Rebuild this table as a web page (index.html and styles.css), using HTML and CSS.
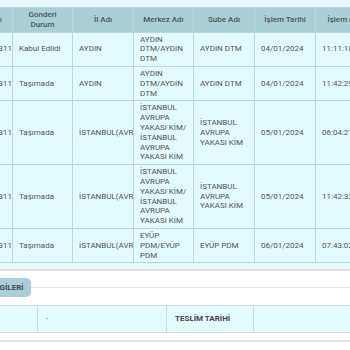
FILE: index.html
```html
<!DOCTYPE html>
<html lang="tr">
<head>
<meta charset="utf-8">
<link rel="stylesheet" href="styles.css">
</head>
<body>
<div class="card">
  <div class="scroller">
    <table class="grid">
      <colgroup>
        <col class="c1"><col class="c2"><col class="c3"><col class="c4"><col class="c5"><col class="c6"><col class="c7">
      </colgroup>
      <thead>
        <tr>
          <th>Gonderi No</th>
          <th>Gonderi Durum</th>
          <th>İl Adı</th>
          <th>Merkez Adı</th>
          <th>Sube Adı</th>
          <th>İşlem Tarihi</th>
          <th>İşlem saati</th>
        </tr>
      </thead>
      <tbody>
        <tr>
          <td class="num">720240104311</td>
          <td>Kabul Edildi</td>
          <td>AYDIN</td>
          <td>AYDIN DTM/AYDIN DTM</td>
          <td>AYDIN DTM</td>
          <td>04/01/2024</td>
          <td>11:11:18</td>
        </tr>
        <tr>
          <td class="num">720240104311</td>
          <td>Taşımada</td>
          <td>AYDIN</td>
          <td>AYDIN DTM/AYDIN DTM</td>
          <td>AYDIN DTM</td>
          <td>04/01/2024</td>
          <td>11:42:29</td>
        </tr>
        <tr>
          <td class="num">720240104311</td>
          <td>Taşımada</td>
          <td>İSTANBUL(AVRUPA)</td>
          <td>İSTANBUL AVRUPA YAKASI KİM/ İSTANBUL AVRUPA YAKASI KİM</td>
          <td>İSTANBUL AVRUPA YAKASI KİM</td>
          <td>05/01/2024</td>
          <td>06:04:21</td>
        </tr>
        <tr>
          <td class="num">720240104311</td>
          <td>Taşımada</td>
          <td>İSTANBUL(AVRUPA)</td>
          <td>İSTANBUL AVRUPA YAKASI KİM/ İSTANBUL AVRUPA YAKASI KİM</td>
          <td>İSTANBUL AVRUPA YAKASI KİM</td>
          <td>05/01/2024</td>
          <td>11:42:33</td>
        </tr>
        <tr>
          <td class="num">720240104311</td>
          <td>Taşımada</td>
          <td>İSTANBUL(AVRUPA)</td>
          <td>EYÜP PDM/EYÜP PDM</td>
          <td>EYÜP PDM</td>
          <td>06/01/2024</td>
          <td>07:43:02</td>
        </tr>
      </tbody>
    </table>
  </div>
</div>

<div class="section">
  <div class="tabrow">
    <div class="tab">TESLİM BİLGİLERİ</div>
    <div class="rule"></div>
  </div>
  <div class="scroller">
    <table class="info">
      <colgroup>
        <col class="i1"><col class="i2"><col class="i3"><col class="i4">
      </colgroup>
      <tbody>
        <tr>
          <th>TESLİM ALAN<br>KİŞİ ADI</th>
          <td>-</td>
          <th>TESLİM TARİHİ</th>
          <td></td>
        </tr>
      </tbody>
    </table>
  </div>
</div>
<div class="bottomline"></div>
</body>
</html>
```

FILE: styles.css
```css
html, body {
  margin: 0;
  padding: 0;
  background: #ffffff;
  font-family: Roboto, "Noto Sans", "Liberation Sans", sans-serif;
  font-size: 8px;
  color: #5a5a5a;
}

.card {
  background: #e6fafc;
  padding-top: 7px;
  padding-bottom: 6px;
  border-bottom: 2px solid #e2e4e4;
}

.scroller {
  overflow: hidden;
  width: 350px;
}

.grid {
  border-collapse: collapse;
  table-layout: fixed;
  width: 427px;
  margin-left: -49px;
}

.c1 { width: 61px; }
.c2 { width: 60px; }
.c3 { width: 61px; }
.c4 { width: 60px; }
.c5 { width: 61px; }
.c6 { width: 61px; }
.c7 { width: 63px; }

.grid th,
.grid td {
  border: 1px solid #b9d8dc;
  line-height: 9.8px;
  padding: 2px 6px;
  overflow: hidden;
  vertical-align: middle;
}

.grid th {
  background: #a9ced5;
  color: #4a5658;
  font-weight: 500;
  text-align: center;
}

.grid td {
  background: #e2fbfd;
  color: #555;
  text-align: left;
}

.grid td.num {
  white-space: nowrap;
}

.section {
  margin-top: 7px;
}

.tabrow {
  display: flex;
  align-items: center;
  height: 19px;
  overflow: hidden;
}

.tab {
  flex: none;
  margin-left: -50px;
  height: 19px;
  line-height: 19px;
  padding: 0 7px 0 8px;
  background: #a9ced5;
  color: #3e4a4c;
  font-weight: 700;
  border-radius: 0 5px 5px 0;
  white-space: nowrap;
}

.rule {
  flex: 1;
  height: 1px;
  background: #dcdfdf;
}

.info {
  margin-top: 8px;
  border-collapse: collapse;
  table-layout: fixed;
  width: 460px;
  margin-left: -60px;
}

.i1 { width: 97px; }
.i2 { width: 129px; }
.i3 { width: 87px; }
.i4 { width: 147px; }

.info th,
.info td {
  border: 1px solid #c9dcde;
  background: #e2fbfd;
  line-height: 9.8px;
  padding: 3px 8px;
  text-align: left;
  vertical-align: middle;
  overflow: hidden;
}

.info th {
  color: #444;
  font-weight: 700;
  white-space: nowrap;
}

.info td {
  color: #777;
}

.bottomline {
  margin-top: 7px;
  height: 2px;
  background: #e2e4e4;
}
```
